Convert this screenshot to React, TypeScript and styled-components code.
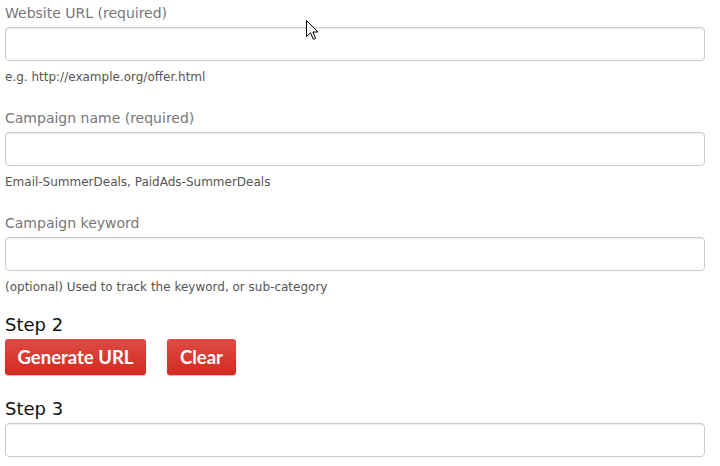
import React from "react";
import styled, { createGlobalStyle } from "styled-components";

const Global = createGlobalStyle`
  html, body { margin: 0; padding: 0; background: #fff; }
  body { font-family: "DejaVu Sans", sans-serif; }
`;

const Page = styled.div`
  position: relative;
  width: 700px;
  padding: 0 0 0 5px;
`;

const Field = styled.div`
  display: flex;
  flex-direction: column;
  margin-bottom: 19px;
`;

const Label = styled.label`
  font-size: 14px;
  line-height: 20px;
  color: #777;
  padding-top: 3px;
  margin-bottom: 4px;
`;

const Input = styled.input`
  box-sizing: border-box;
  width: 700px;
  height: 34px;
  margin: 0;
  border: 1px solid #ccc;
  border-radius: 4px;
  background: #fff;
  box-shadow: inset 0 1px 1px rgba(0, 0, 0, 0.075);
  padding: 6px 12px;
  font-size: 14px;
  outline: none;
`;

const Hint = styled.div`
  font-size: 12px;
  line-height: 18px;
  color: #555;
  margin-top: 7px;
`;

const Step = styled.div<{ $mt?: number }>`
  font-size: 18px;
  line-height: 20px;
  color: #111;
  margin-top: ${(p) => p.$mt ?? 0}px;
`;

const ButtonRow = styled.div`
  display: flex;
  gap: 21px;
  margin-top: 4px;
  margin-bottom: 24px;
`;

const RedButton = styled.button<{ $w: number }>`
  box-sizing: border-box;
  width: ${(p) => p.$w}px;
  height: 36px;
  border: none;
  border-radius: 3px;
  background: linear-gradient(to bottom, #de4c44 0%, #d32a1f 100%);
  box-shadow: 0 1px 1px rgba(0, 0, 0, 0.25);
  color: #fff;
  font-family: Lato, "Open Sans", sans-serif;
  font-weight: 700;
  font-size: 18.5px;
  padding: 0;
  cursor: pointer;
`;

const ResultInput = styled(Input)`
  margin-top: 4px;
`;

const Cursor = styled.svg`
  position: absolute;
  left: 306px;
  top: 20px;
`;

export default function App() {
  return (
    <>
      <Global />
      <Page>
        <Field>
          <Label>Website URL (required)</Label>
          <Input />
          <Hint>e.g. http://example.org/offer.html</Hint>
        </Field>
        <Field>
          <Label>Campaign name (required)</Label>
          <Input />
          <Hint>Email-SummerDeals, PaidAds-SummerDeals</Hint>
        </Field>
        <Field>
          <Label>Campaign keyword</Label>
          <Input />
          <Hint>(optional) Used to track the keyword, or sub-category</Hint>
        </Field>
        <Step $mt={2}>Step 2</Step>
        <ButtonRow>
          <RedButton $w={141}>Generate URL</RedButton>
          <RedButton $w={69}>Clear</RedButton>
        </ButtonRow>
        <Step>Step 3</Step>
        <ResultInput />
        <Cursor width="14" height="22" viewBox="0 0 14 22">
          <path
            d="M0.5 0.5 L0.5 16.5 L4.5 12.8 L7.3 19.3 L9.6 18.3 L6.9 12 L12 12 Z"
            fill="#fff"
            stroke="#000"
            strokeWidth="1"
            strokeLinejoin="miter"
          />
        </Cursor>
      </Page>
    </>
  );
}
